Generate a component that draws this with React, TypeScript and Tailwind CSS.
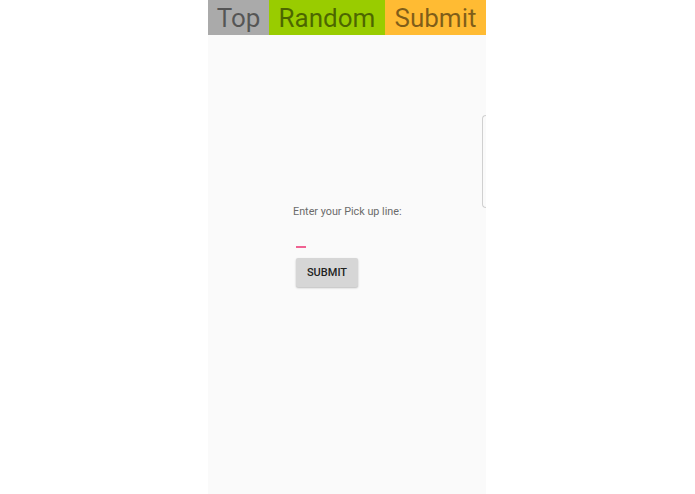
import React from 'react';

const tabs = [
  { label: 'Top', className: 'w-[61px] bg-[#aaaaaa]' },
  { label: 'Random', className: 'w-[116px] bg-[#99cc00]' },
  { label: 'Submit', className: 'w-[101px] bg-[#ffbb33]' },
];

export default function App() {
  return (
    <div className="flex h-[494px] w-full bg-white pl-[208px] font-['Roboto',sans-serif]">
      <div className="relative flex w-[278px] flex-col bg-[#fafafa]">
        {/* Tabs */}
        <div className="flex h-[35px]">
          {tabs.map(tab => (
            <div
              key={tab.label}
              className={`${tab.className} flex items-center justify-center pt-[1px] text-[26px] leading-none text-black/50`}
            >
              {tab.label}
            </div>
          ))}
        </div>

        {/* Form */}
        <div className="flex flex-col pl-[85px] pt-[170px]">
          <p className="text-[10.8px] leading-[13px] text-[#6b6b6b]">Enter your Pick up line:</p>
          <div className="ml-[3px] mt-[28px] h-[2px] w-[10px] bg-[#f06292]" />
          <button className="ml-[3px] mt-[10px] h-[29px] w-[62px] rounded-[2px] bg-[#d6d6d6] pt-[1px] text-[11px] font-medium text-[#222] shadow-[0_1px_2px_rgba(0,0,0,0.25)]">
            SUBMIT
          </button>
        </div>

        {/* edge handle */}
        <div className="absolute right-0 top-[115px] h-[93px] w-[4px] rounded-l-[4px] border border-r-0 border-[#d0d0d0]" />
      </div>
    </div>
  );
}
